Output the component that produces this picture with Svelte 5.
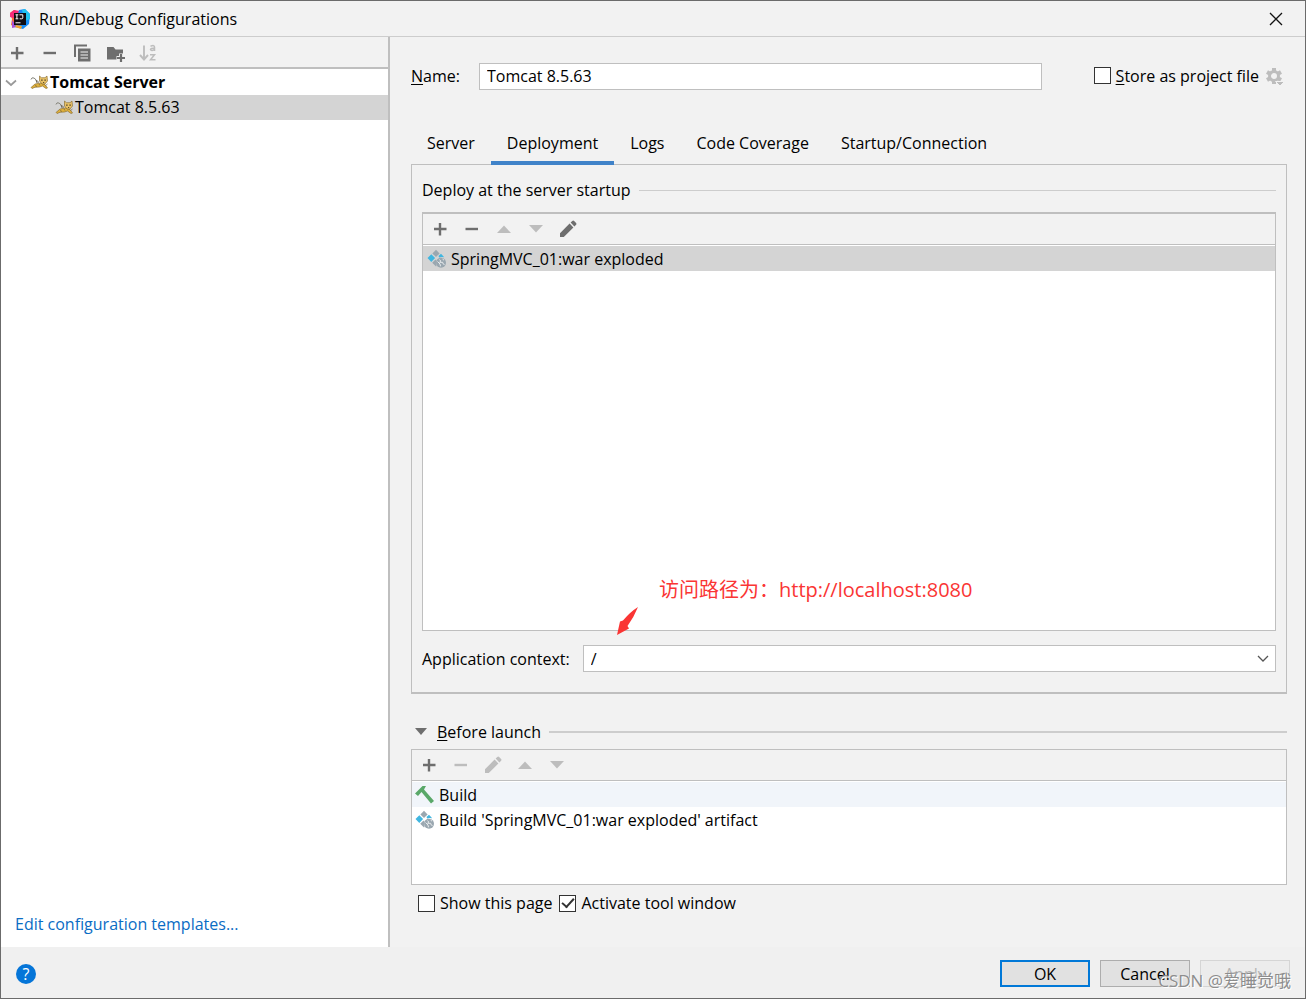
<script lang="ts">
  let name = $state("Tomcat 8.5.63");
  let context = $state("/");
  let activeTab = $state("Deployment");
  let storeAsFile = $state(false);
  let showPage = $state(false);
  let activateWindow = $state(true);

  const tabs = ["Server", "Deployment", "Logs", "Code Coverage", "Startup/Connection"];
</script>

{#snippet plus()}
  <svg width="20" height="20" viewBox="0 0 20 20"><path d="M10 4v12.500M4 10h12.500" stroke="currentColor" stroke-width="2.4" /></svg>
{/snippet}

{#snippet minus()}
  <svg width="20" height="20" viewBox="0 0 20 20"><path d="M3.500 10h12.500" stroke="currentColor" stroke-width="2.4" /></svg>
{/snippet}

{#snippet up()}
  <svg width="20" height="20" viewBox="0 0 20 20"><path d="M3 14l7-7.5 7 7.5z" fill="currentColor" /></svg>
{/snippet}

{#snippet down()}
  <svg width="20" height="20" viewBox="0 0 20 20"><path d="M3 6h14l-7 7.5z" fill="currentColor" /></svg>
{/snippet}

{#snippet pencil()}
  <svg width="20" height="20" viewBox="0 0 20 20">
    <path d="M2 14.2L11.6 4.6l3.8 3.8L5.8 18H2zM12.6 3.6l1.7-1.7q.9-.8 1.8 0l2 2q.8.9 0 1.8l-1.7 1.7z" fill="currentColor" />
  </svg>
{/snippet}

{#snippet cat()}
  <svg class="cat" width="19" height="16" viewBox="0 0 19 16">
    <path d="M1 4.500Q1.500 2 4 3t3 5" fill="none" stroke="#85857c" stroke-width="1" />
    <path d="M1 12.500l4-3.500 5.500-1 4.500 1.500 2.500 3.500-1.500.5-3.500-2.500-3 1-4.500.3-3 1.200z" fill="#dfb03c" stroke="#7d6226" stroke-width=".6" />
    <path d="M9.500 1l2 1.700h3.500L17 1l.5 5-2.500 3h-3L9.500 6z" fill="#e9c267" stroke="#7d6226" stroke-width=".6" />
    <path d="M11.300 4.500h1.200v1.300h-1.200zM14.500 4.500h1.200v1.300h-1.200zM13 7h1.200v.8H13z" fill="#332a17" />
    <path d="M6 6.500l3 1M5.500 5l3 1.500M15.500 10.500l2-1.500M5 10.500l2 1M9 9l1 1.500" stroke="#5c5340" stroke-width=".6" />
  </svg>
{/snippet}

{#snippet artifact()}
  <svg width="20" height="20" viewBox="0 0 20 20">
    <path d="M9 .8l3.600 3.600L9 8 5.400 4.400z" fill="#9aa7b0" />
    <path d="M4.300 5.300l3.800 3.800-3.800 3.800L.5 9.100zM11.500 7l2.500-2.300 3.200 3.500q-3-.8-5 .4z" fill="#40b6e0" />
    <path d="M8.500 10.500l1 1.300q-.9 2 .1 5L9 17.500l-3.800-3.700z" fill="#9aa7b0" />
    <circle cx="14" cy="13.800" r="5" fill="#9aa7b0" />
    <path d="M10.500 12.500l2.500 2.500.5 2.300M12.500 10.500l1.200 1.500-1 1.300h3l.3 1.500 1.500.7M15.500 10l1.500 1.200" fill="none" stroke="#e7eaec" stroke-width="1" />
  </svg>
{/snippet}

<div class="dialog">
  <header class="title-bar">
    <svg width="20" height="20" viewBox="0 0 20 20">
      <path d="M0 4l4-3 5 2-4 15-4-2 1-6z" fill="#fc6b35" />
      <path d="M0 4l4-3 6 1-3 8-7-2z" fill="#f52b78" />
      <path d="M2 11l5 7-5 1z" fill="#a650d8" />
      <path d="M9 1l6-1 5 5-1 10-6 5-8-2z" fill="#168af5" />
      <path d="M12 1l3-1 5 5v5l-5 2z" fill="#21c4f1" />
      <path d="M6 16l6 1-1 3-6-2z" fill="#f8a42c" />
      <path d="M4 4h12v12H4z" fill="#100c12" />
      <path d="M5.500 5.800h2.800M6.900 5.800v4M5.500 9.800h2.800M9.500 5.800h3.300v3q0 1-1 1H9.700M5.500 13.800h5" fill="none" stroke="#fff" stroke-width="1" />
    </svg>
    <h1>Run/Debug Configurations</h1>
    <button class="close" type="button" aria-label="Close">
      <svg width="14" height="14" viewBox="0 0 14 14"><path d="M1 1l12 12M13 1L1 13" stroke="#111" stroke-width="1.3" /></svg>
    </button>
  </header>

  <div class="body">
    <aside class="sidebar">
      <div class="toolbar side-tools">
        <button type="button" aria-label="Add">{@render plus()}</button>
        <button type="button" aria-label="Remove">{@render minus()}</button>
        <button type="button" aria-label="Copy">
          <svg width="20" height="20" viewBox="0 0 20 20">
            <path d="M2 14V2.500h12" fill="none" stroke="currentColor" stroke-width="2" />
            <path d="M5 5.500h12.500V18.500H5z" fill="currentColor" />
            <path d="M7.500 9h7.500M7.500 12h7.500M7.500 15h7.500" stroke="#f2f2f2" stroke-width="1.100" />
          </svg>
        </button>
        <button type="button" aria-label="New folder">
          <svg width="20" height="20" viewBox="0 0 20 20">
            <path d="M1 4h6.500l2 2.500H17v4h-4V13h-2.500v3.500H1z" fill="currentColor" />
            <path d="M15 11v8M11 15h8" stroke="currentColor" stroke-width="2.200" />
          </svg>
        </button>
        <button type="button" aria-label="Sort" disabled>
          <svg width="20" height="20" viewBox="0 0 20 20" fill="none" stroke="currentColor">
            <path d="M5 2.500v13M1 12l4 4.500L9 12" stroke-width="1.900" />
            <path d="M11.500 3.200q4-1.500 4 .8v4M15.500 5.300q-4-.2-4 1.300 1.500 1.900 4-.3M11 11.700h4.500L11.500 16.700h5" stroke-width="1.500" />
          </svg>
        </button>
      </div>
      <ul class="tree">
        <li class="node root">
          <svg class="twist" width="12" height="8" viewBox="0 0 12 8"><path d="M1 1.500l5 4.500 5-4.500" fill="none" stroke="#999" stroke-width="1.700" /></svg>
          {@render cat()}
          <span>Tomcat Server</span>
        </li>
        <li class="node child selected">
          {@render cat()}
          <span>Tomcat 8.5.63</span>
        </li>
      </ul>
      <a class="templates" href="#templates">Edit configuration templates...</a>
    </aside>

    <main class="editor">
      <div class="name-row">
        <label class="name-label" for="config-name"><u>N</u>ame:</label>
        <input id="config-name" class="name-input" type="text" bind:value={name} />
        <label class="check store"><input type="checkbox" bind:checked={storeAsFile} /><span><u>S</u>tore as project file</span></label>
        <button class="gear" type="button" aria-label="Storage options" disabled>
          <svg width="20" height="20" viewBox="0 0 20 20">
            <circle cx="9" cy="9" r="4.500" fill="none" stroke="currentColor" stroke-width="3" />
            <path d="M9 1v3M9 14v3M2 5l2.600 1.500M13.400 11.500L16 13M2 13l2.600-1.500M13.400 6.500L16 5" stroke="currentColor" stroke-width="4" />
            <path d="M10.500 14.500h9l-4.500 4.500z" fill="currentColor" stroke="#f2f2f2" stroke-width="1" />
          </svg>
        </button>
      </div>

      <div class="tabs" role="tablist">
        {#each tabs as tab (tab)}
          <button
            class="tab"
            class:active={activeTab === tab}
            type="button"
            role="tab"
            aria-selected={activeTab === tab}
            onclick={() => (activeTab = tab)}
          >
            {tab}
          </button>
        {/each}
      </div>

      <section class="panel">
        <h2 class="heading">Deploy at the server startup</h2>
        <div class="list deploy">
          <div class="toolbar">
            <button type="button" aria-label="Add artifact">{@render plus()}</button>
            <button type="button" aria-label="Remove artifact">{@render minus()}</button>
            <button type="button" aria-label="Move up" disabled>{@render up()}</button>
            <button type="button" aria-label="Move down" disabled>{@render down()}</button>
            <button type="button" aria-label="Edit artifact">{@render pencil()}</button>
          </div>
          <ul>
            <li class="item selected">{@render artifact()}<span>SpringMVC_01:war exploded</span></li>
          </ul>
          <p class="note">访问路径为：http://localhost:8080</p>
          <svg class="arrow" width="22" height="28" viewBox="0 0 22 28"><path d="M21 0Q13 5 6 13.500L3 14.500 0 28l12-6.500-1.500-2.500Q17 10 21 0z" fill="#fa3534" /></svg>
        </div>
        <div class="context-row">
          <label for="app-context">Application context:</label>
          <div class="combo">
            <select id="app-context" bind:value={context}>
              <option value="/">/</option>
            </select>
            <svg width="12" height="8" viewBox="0 0 12 8"><path d="M1 1l5 5 5-5" fill="none" stroke="#555" stroke-width="1.300" /></svg>
          </div>
        </div>
      </section>

      <section class="launch">
        <h2 class="heading thick">
          <svg width="12" height="8" viewBox="0 0 12 8"><path d="M0 0h12L6 7z" fill="#6e6e6e" /></svg>
          <span><u>B</u>efore launch</span>
        </h2>
        <div class="list tasks">
          <div class="toolbar">
            <button type="button" aria-label="Add task">{@render plus()}</button>
            <button type="button" aria-label="Remove task" disabled>{@render minus()}</button>
            <button type="button" aria-label="Edit task" disabled>{@render pencil()}</button>
            <button type="button" aria-label="Move task up" disabled>{@render up()}</button>
            <button type="button" aria-label="Move task down" disabled>{@render down()}</button>
          </div>
          <ul>
            <li class="item tinted">
              <svg width="20" height="20" viewBox="0 0 20 20"><path d="M0 8.500L7.500 1H11L9 4.500l10 11.500-3 2.500L6.500 7 3 11z" fill="#59a869" /></svg>
              <span>Build</span>
            </li>
            <li class="item">{@render artifact()}<span>Build 'SpringMVC_01:war exploded' artifact</span></li>
          </ul>
        </div>
        <div class="options">
          <label class="check"><input type="checkbox" bind:checked={showPage} /><span>Show this page</span></label>
          <label class="check"><input type="checkbox" bind:checked={activateWindow} /><span>Activate tool window</span></label>
        </div>
      </section>
    </main>
  </div>

  <footer class="footer">
    <button class="help" type="button" aria-label="Help">?</button>
    <button class="action primary" type="button">OK</button>
    <button class="action" type="button">Cancel</button>
    <button class="action" type="button" disabled>Apply</button>
    <span class="watermark">CSDN @爱睡觉哦</span>
  </footer>
</div>

<style>
  :global(body) {
    margin: 0;
  }

  .dialog {
    box-sizing: border-box;
    display: flex;
    flex-direction: column;
    min-height: 100vh;
    border: 1px solid #6b6b6b;
    background: #f2f2f2;
    color: #000;
    font: 16px/24px "Open Sans", "Noto Sans CJK SC", sans-serif;
  }

  button,
  input,
  select {
    box-sizing: border-box;
    margin: 0;
    padding: 0;
    border: none;
    background: none;
    color: inherit;
    font: inherit;
  }

  svg {
    display: block;
    flex: none;
  }

  ul {
    margin: 0;
    padding: 0;
    list-style: none;
  }

  u {
    text-underline-offset: 2px;
  }

  .title-bar {
    display: flex;
    align-items: center;
    gap: 9px;
    height: 35px;
    padding: 0 22px 0 9px;
    border-bottom: 1px solid #cdcdcd;
  }

  h1 {
    flex: 1;
    margin: 0;
    font-size: 16px;
    font-weight: 400;
  }

  .body {
    display: flex;
    flex: 1;
  }

  .sidebar {
    box-sizing: border-box;
    display: flex;
    flex: none;
    flex-direction: column;
    width: 389px;
    border-right: 2px solid #bfbfbf;
    background: #fff;
  }

  .toolbar {
    display: flex;
    align-items: center;
    gap: 12px;
    height: 30px;
    padding: 0 7px;
    border-bottom: 1px solid #bfbfbf;
    background: #f2f2f2;
    color: #6e6e6e;
  }

  .toolbar button:disabled,
  .gear:disabled {
    color: #bdbdbd;
  }

  .side-tools {
    gap: 13px;
    padding: 1px 6px 0;
    height: 29px;
    border-bottom-width: 2px;
  }

  .tree {
    flex: 1;
    padding-top: 1px;
  }

  .node {
    display: flex;
    align-items: center;
    height: 25px;
  }

  .node span {
    line-height: 22px;
    padding-bottom: 2px;
  }

  .root {
    padding-left: 4px;
    font-weight: 700;
  }

  .twist {
    margin-right: 13px;
  }

  .cat {
    margin-right: 1px;
  }

  .child {
    padding-left: 54px;
  }

  .selected {
    background: #d4d4d4;
  }

  .templates {
    align-self: flex-start;
    margin: 0 0 11px 14px;
    color: #0a6cc4;
    text-decoration: none;
  }

  .editor {
    display: flex;
    flex: 1;
    flex-direction: column;
    min-width: 0;
    padding: 26px 18px 32px 21px;
  }

  .name-row {
    display: flex;
    align-items: center;
    padding-right: 2px;
  }

  .name-label {
    width: 68px;
  }

  .name-label,
  .store {
    padding-bottom: 2px;
  }

  .name-input {
    flex: 1;
    min-width: 0;
    height: 27px;
    padding: 0 7px 2px;
    border: 1px solid #bfbfbf;
    background: #fff;
  }

  .check {
    display: flex;
    align-items: center;
    gap: 5px;
  }

  .check input {
    display: grid;
    place-items: center;
    width: 17px;
    height: 17px;
    border: 1px solid #333;
    background: #fff;
    appearance: none;
  }

  .check input:checked::after {
    content: "";
    width: 10px;
    height: 5px;
    border: solid #333;
    border-width: 0 0 2px 2px;
    transform: translateY(-2px) rotate(-48deg);
  }

  .store {
    margin: 0 6px 0 52px;
  }

  .tabs {
    position: relative;
    z-index: 1;
    display: flex;
    height: 43px;
    margin: 32px 0 -1px;
  }

  .tab {
    padding: 3px 16px 0;
    border-bottom: 4px solid transparent;
  }

  .tab.active {
    border-color: #4083c9;
  }

  .panel {
    display: flex;
    flex: 1;
    flex-direction: column;
    padding: 13px 10px 20px;
    border: 1px solid #bfbfbf;
    border-bottom-width: 2px;
  }

  .heading {
    display: flex;
    align-items: center;
    gap: 8px;
    margin: 0;
    font-size: 16px;
    font-weight: 400;
  }

  .heading::after {
    content: "";
    flex: 1;
    height: 1px;
    background: #cdcdcd;
  }

  .thick::after {
    height: 2px;
  }

  .list {
    border: 1px solid #bfbfbf;
    background: #fff;
  }

  .deploy {
    position: relative;
    flex: 1;
    margin: 10px 0 14px;
    border-top-width: 2px;
  }

  .item {
    display: flex;
    align-items: center;
    gap: 4px;
    height: 25px;
    padding-left: 4px;
  }

  .item:first-child {
    margin-top: 1px;
  }

  /* Annotation drawn over the artifact list */
  .note {
    position: absolute;
    bottom: 25px;
    left: 236px;
    margin: 0;
    color: #fa3534;
    font-size: 20px;
    line-height: 30px;
    white-space: nowrap;
  }

  .arrow {
    position: absolute;
    bottom: -5px;
    left: 194px;
  }

  .context-row {
    display: flex;
    align-items: center;
    gap: 13px;
  }

  .combo {
    position: relative;
    flex: 1;
  }

  .combo select {
    display: block;
    width: 100%;
    height: 27px;
    padding: 0 7px;
    border: 1px solid #bfbfbf;
    background: #fff;
    appearance: none;
  }

  .combo svg {
    position: absolute;
    top: 10px;
    right: 7px;
    pointer-events: none;
  }

  .launch {
    margin-top: 26px;
  }

  .launch .heading svg {
    margin: 0 2px 0 4px;
  }

  .tasks {
    min-height: 134px;
    margin: 5px 0 6px;
  }

  .tasks .item {
    padding-left: 3px;
  }

  .tinted {
    background: #f1f5fa;
  }

  .options {
    display: flex;
    gap: 7px;
    padding-left: 7px;
  }

  .footer {
    position: relative;
    display: flex;
    align-items: center;
    gap: 10px;
    box-sizing: border-box;
    height: 51px;
    padding: 2px 15px 0;
    background: #f0f0f0;
  }

  .help {
    width: 20px;
    height: 20px;
    margin-right: auto;
    border-radius: 50%;
    background: #0575d8;
    color: #fff;
    line-height: 20px;
  }

  .action {
    width: 90px;
    height: 27px;
    border: 1px solid #adadad;
    background: #e1e1e1;
    line-height: 20px;
  }

  .primary {
    border: 2px solid #0078d7;
  }

  .action:disabled {
    border-color: #d5d5d5;
    background: #ececec;
    color: #b5b5b5;
  }

  .watermark {
    position: absolute;
    right: 14px;
    bottom: 5px;
    color: #8d8d8d;
    font-size: 17px;
    text-shadow: 1px 1px #fff;
  }
</style>
